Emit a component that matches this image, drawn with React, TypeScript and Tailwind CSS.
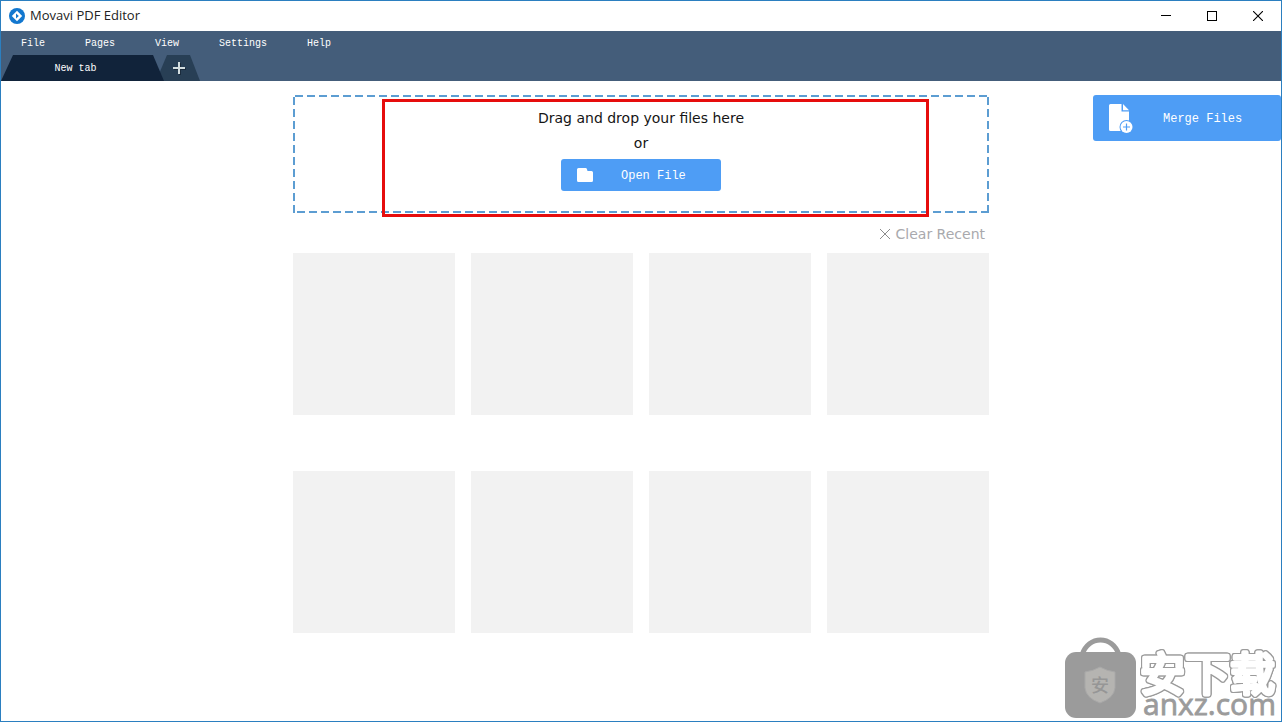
const menuItems = ["File", "Pages", "View", "Settings", "Help"];
const recentSlots = [1, 2, 3, 4, 5, 6, 7, 8];

function AppLogo() {
  return (
    <svg width="16" height="16" viewBox="0 0 16 16" aria-hidden="true">
      <circle cx="8" cy="8" r="8" fill="#1277cf" />
      <path d="M8 2.8 13.2 8 8 13.2 2.8 8Z" fill="#fff" />
      <path d="M7 5.4 9.8 8 7 10.6Z" fill="#1277cf" />
    </svg>
  );
}

function TitleBar() {
  const control = "flex h-full w-[46px] items-center justify-center";
  return (
    <header className="flex h-[30px] items-center bg-white pl-2">
      <AppLogo />
      <h1 className="ml-[5px] flex-1 font-['Open_Sans',sans-serif] text-[13px] text-[#222]">Movavi PDF Editor</h1>
      <button className={control} aria-label="Minimize">
        <svg width="10" height="10" stroke="#000" fill="none" shapeRendering="crispEdges">
          <path d="M0 4.5H10" />
        </svg>
      </button>
      <button className={control} aria-label="Maximize">
        <svg width="10" height="10" stroke="#000" fill="none" shapeRendering="crispEdges">
          <rect x="0.5" y="0.5" width="9" height="9" />
        </svg>
      </button>
      <button className={control} aria-label="Close">
        <svg width="10" height="10" stroke="#000" strokeWidth="1.1" fill="none">
          <path d="M0 0 10 10M10 0 0 10" />
        </svg>
      </button>
    </header>
  );
}

function MenuAndTabs() {
  return (
    <div className="bg-[#445d7a] font-['Liberation_Mono',monospace] text-[10px] text-white">
      <nav className="flex h-6 items-center gap-10 pl-5">
        {menuItems.map((item) => (
          <button key={item} className="h-full">
            {item}
          </button>
        ))}
      </nav>
      <div className="flex h-[26px]">
        <button className="relative z-10 w-[163px] bg-[#11233a] pr-[14px] [clip-path:polygon(12px_0,152px_0,100%_100%,0_100%)]">
          New tab
        </button>
        <button
          aria-label="Add tab"
          className="-ml-2 flex w-11 items-center justify-center bg-[#283f55] pl-0.5 [clip-path:polygon(11px_0,34px_0,100%_100%,0_100%)]"
        >
          <svg width="14" height="14" viewBox="0 0 14 14" fill="none" strokeWidth="2">
            <path d="M8 2V14M2 8H14" stroke="#1a2b3c" />
            <path d="M7 1V13M1 7H13" stroke="#d3dee0" />
          </svg>
        </button>
      </div>
    </div>
  );
}

function DashedFrame() {
  return (
    <svg
      className="pointer-events-none absolute inset-0 h-full w-full"
      stroke="#5c9dd2"
      strokeWidth="2"
      strokeDasharray="8 4"
      aria-hidden="true"
    >
      <line x1="2" y1="1" x2="100%" y2="1" />
      <line x1="4" y1="117" x2="100%" y2="117" />
      <line x1="1" y1="2" x2="1" y2="100%" />
      <svg x="100%" overflow="visible">
        <line x1="-1" y1="2" x2="-1" y2="118" />
      </svg>
    </svg>
  );
}

function DropZone() {
  return (
    <section className="relative flex h-[118px] flex-col items-center pt-[11px] text-sm text-[#151515]">
      <DashedFrame />
      <p className="leading-[25px]">Drag and drop your files here</p>
      <p className="leading-[25px]">or</p>
      <button className="mt-[3px] flex h-8 w-40 items-center gap-7 rounded-[3px] bg-[#4e9df5] pl-4 font-['Liberation_Mono',monospace] text-xs text-white">
        <svg width="16" height="14" viewBox="0 0 16 14" fill="#fff" aria-hidden="true">
          <path d="M1.5 0H8.7Q9.6 0 9.9 1L10.5 3H14.5Q16 3 16 4.5V12.5Q16 14 14.5 14H1.5Q0 14 0 12.5V1.5Q0 0 1.5 0Z" />
        </svg>
        <span className="pt-0.5">Open File</span>
      </button>
      <div className="pointer-events-none absolute top-1 left-[89px] h-[118px] w-[547px] border-3 border-[#e60d0d]" />
    </section>
  );
}

function MergeButton() {
  return (
    <button className="flex h-[46px] w-[188px] items-center gap-[30px] justify-self-end rounded-[3px] bg-[#4e9df5] pl-4 font-['Liberation_Mono',monospace] text-xs text-white">
      <svg width="24" height="30" viewBox="0 0 24 30" aria-hidden="true">
        <path d="M1.5 1H12.5V8.5H20V28H1.5Q0 28 0 26.5V2.5Q0 1 1.5 1Z" fill="#fff" />
        <path d="M14 1 20 7.2H14Z" fill="#fff" />
        <circle cx="17.5" cy="24" r="7" fill="#4e9df5" />
        <circle cx="17.5" cy="24" r="6" fill="#fff" />
        <path d="M17.5 20.5V27.5M14 24H21" stroke="#4e9df5" strokeWidth="1.2" />
      </svg>
      <span className="pt-0.5">Merge Files</span>
    </button>
  );
}

function Watermark() {
  return (
    <svg
      className="pointer-events-none absolute right-0 bottom-0 overflow-visible"
      width="218"
      height="86"
      viewBox="0 0 218 86"
      role="img"
      aria-label="安下载 anxz.com"
    >
      <path d="M19 20C25 0 50 0 56 20" fill="none" stroke="#9b9b9b" strokeWidth="5" />
      <rect x="2" y="17" width="71" height="66" rx="11" fill="#9b9b9b" />
      <path d="M37 32Q44 36 52 37V53Q51 63 37 68Q23 63 22 53V37Q30 36 37 32Z" fill="#b5b4b1" stroke="#a8a8a8" />
      <text x="37" y="57" textAnchor="middle" fill="#969696" fontSize="18" fontWeight="500" fontFamily="Noto Sans CJK SC, sans-serif">
        安
      </text>
      <text
        className="[filter:drop-shadow(1px_0_0_#9b9b9b)_drop-shadow(-1px_0_0_#9b9b9b)_drop-shadow(0_1px_0_#9b9b9b)_drop-shadow(0_-1px_0_#9b9b9b)]"
        x="77"
        y="56"
        fontSize="45"
        fontWeight="400"
        fontFamily="Noto Sans CJK SC, sans-serif"
        fill="#fff"
        stroke="#fff"
        strokeWidth="4"
        strokeLinejoin="round"
      >
        安下载
      </text>
      <text x="80" y="80" fontSize="30" fontFamily="Open Sans, sans-serif" fill="#9b9b9b" stroke="#9b9b9b" strokeWidth="0.8">
        anxz.com
      </text>
    </svg>
  );
}

export default function App() {
  return (
    <div className="relative flex min-h-screen flex-col border border-[#2b7fc0] bg-white font-['DejaVu_Sans',sans-serif]">
      <TitleBar />
      <MenuAndTabs />
      <main className="grid flex-1 grid-cols-[1fr_minmax(0,696px)_1fr] items-start pt-[14px]">
        <div className="col-start-2">
          <DropZone />
          <div className="flex h-10 items-center justify-end pt-px pr-1">
            <button className="flex items-center gap-1.5 text-sm text-[#a9a9ad]">
              <svg width="10" height="10" stroke="#8c8c8c" fill="none" aria-hidden="true">
                <path d="M0 0 10 10M10 0 0 10" />
              </svg>
              Clear Recent
            </button>
          </div>
          <div className="grid grid-cols-4 gap-x-4 gap-y-14">
            {recentSlots.map((slot) => (
              <div key={slot} className="aspect-square bg-[#f2f2f2]" />
            ))}
          </div>
        </div>
        <MergeButton />
      </main>
      <Watermark />
    </div>
  );
}
